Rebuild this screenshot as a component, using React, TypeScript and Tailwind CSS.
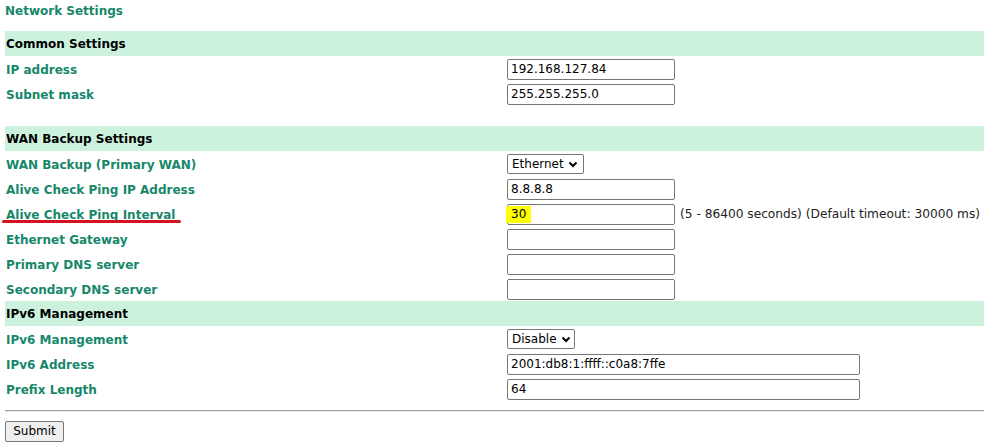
import { ReactNode } from "react";

const font = "font-['Verdana','DejaVu_Sans',sans-serif]";

function Band({ title }: { title: string }) {
  return (
    <div className="h-[25px] flex items-center bg-[#ccf2de] pl-[1px] pt-[1px] text-[12px] font-bold text-black">
      {title}
    </div>
  );
}

function Row({ label, children, mark }: { label: string; children: ReactNode; mark?: boolean }) {
  return (
    <div className="h-[25px] flex items-center pt-[1px]">
      <div className="w-[502px] shrink-0 pl-[1px] pt-[2px] text-[12px] font-bold text-[#17876a] relative">
        {label}
        {mark && (
          <span className="absolute left-[-3px] top-[16px] w-[179px] h-[3px] rounded-full bg-[#d2141e]" />
        )}
      </div>
      <div className="flex items-center gap-[5px] whitespace-nowrap">{children}</div>
    </div>
  );
}

function Field({ value = "", wide }: { value?: string; wide?: boolean }) {
  return (
    <input
      readOnly
      value={value}
      className={`${wide ? "w-[353px]" : "w-[168px]"} shrink-0 h-[21px] border border-[#767676] rounded-[2px] px-[3px] text-[12px] text-black bg-white outline-none ${font}`}
    />
  );
}

function Select({ value, width }: { value: string; width: string }) {
  return (
    <div className={`${width} h-[20px] border border-[#767676] rounded-[2px] bg-white flex items-center pl-[4px] gap-[4px] text-[12px] text-black`}>
      <span>{value}</span>
      <svg width="10" height="7" viewBox="0 0 10 7" className="mt-[1px]">
        <path d="M1.5 1.5 L5 5 L8.5 1.5" fill="none" stroke="#000" strokeWidth="2" />
      </svg>
    </div>
  );
}

export default function App() {
  return (
    <div className={`w-[984px] h-[442px] bg-white pl-[5px] ${font} overflow-hidden`}>
      <div className="h-[31px] pt-[3px] text-[12px] font-bold text-[#17876a] leading-[16px]">Network Settings</div>

      <Band title="Common Settings" />
      <Row label="IP address"><Field value="192.168.127.84" /></Row>
      <Row label="Subnet mask"><Field value="255.255.255.0" /></Row>
      <div className="h-[20px]" />

      <Band title="WAN Backup Settings" />
      <Row label="WAN Backup (Primary WAN)"><Select value="Ethernet" width="w-[77px]" /></Row>
      <Row label="Alive Check Ping IP Address"><Field value="8.8.8.8" /></Row>
      <Row label="Alive Check Ping Interval" mark>
        <div className="w-[168px] shrink-0 h-[21px] border border-[#767676] rounded-[2px] bg-white flex items-center text-[12px] text-black">
          <span className="bg-[#ffff00] ml-[-2px] pl-[5px] pr-[5px] leading-[17px]">30</span>
        </div>
        <span className="text-[12.2px] text-[#222]">(5 - 86400 seconds) (Default timeout: 30000 ms)</span>
      </Row>
      <Row label="Ethernet Gateway"><Field /></Row>
      <Row label="Primary DNS server"><Field /></Row>
      <Row label="Secondary DNS server"><Field /></Row>

      <Band title="IPv6 Management" />
      <Row label="IPv6 Management"><Select value="Disable" width="w-[68px]" /></Row>
      <Row label="IPv6 Address"><Field value="2001:db8:1:ffff::c0a8:7ffe" wide /></Row>
      <Row label="Prefix Length"><Field value="64" wide /></Row>

      <div className="pt-[9px]">
        <div className="h-[2px] border-t border-[#9a9a9a] border-b border-b-[#eeeeee]" />
      </div>
      <div className="pt-[6px]">
        <button className="h-[21px] w-[59px] border border-[#767676] rounded-[2px] bg-[#efefef] text-[12px] text-black leading-none">
          Submit
        </button>
      </div>
    </div>
  );
}
